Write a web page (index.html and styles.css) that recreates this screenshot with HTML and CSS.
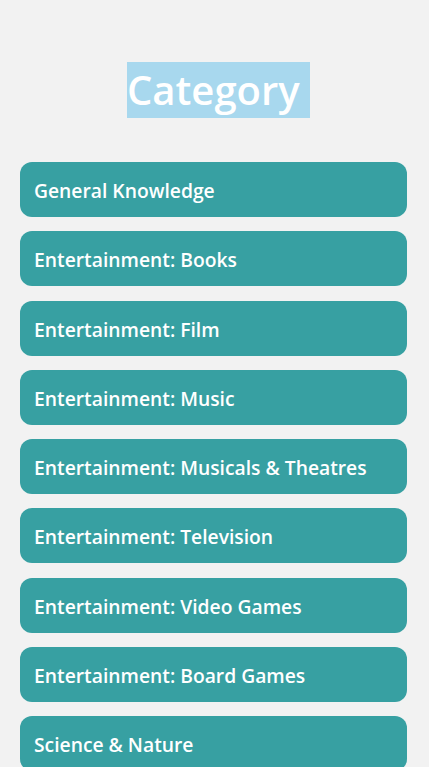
FILE: index.html
```html
<!DOCTYPE html>
<html>
<head>
<meta charset="utf-8">
<link rel="stylesheet" href="styles.css">
</head>
<body>
<div class="page">
  <h1 class="title"><span class="title-text">Category </span></h1>
  <div class="list">
    <button class="cat">General Knowledge</button>
    <button class="cat">Entertainment: Books</button>
    <button class="cat">Entertainment: Film</button>
    <button class="cat">Entertainment: Music</button>
    <button class="cat">Entertainment: Musicals &amp; Theatres</button>
    <button class="cat">Entertainment: Television</button>
    <button class="cat">Entertainment: Video Games</button>
    <button class="cat">Entertainment: Board Games</button>
    <button class="cat">Science &amp; Nature</button>
  </div>
</div>
</body>
</html>
```
FILE: styles.css
```css
html, body {
  margin: 0;
  padding: 0;
  background: #f2f2f2;
  font-family: "Open Sans", "Noto Sans", sans-serif;
  overflow: hidden;
}
.page {
  display: flex;
  flex-direction: column;
  align-items: center;
  padding: 62px 22px 0 20px;
}
.title {
  margin: 0 0 44px 10px;
  font-size: 40px;
  line-height: 56px;
  font-weight: 600;
  color: #ffffff;
}
.title-text {
  background: #a8d8ee;
  white-space: pre;
  display: inline-block;
}
.list {
  width: 387px;
  display: flex;
  flex-direction: column;
  gap: 14.25px;
}
.cat {
  display: block;
  width: 100%;
  height: 55px;
  border: none;
  border-radius: 12px;
  background: #37a0a2;
  color: #ffffff;
  font-family: "Open Sans", "Noto Sans", sans-serif;
  font-size: 19.3px;
  font-weight: 600;
  text-align: left;
  padding: 2px 14px 0 14px;
}
```
